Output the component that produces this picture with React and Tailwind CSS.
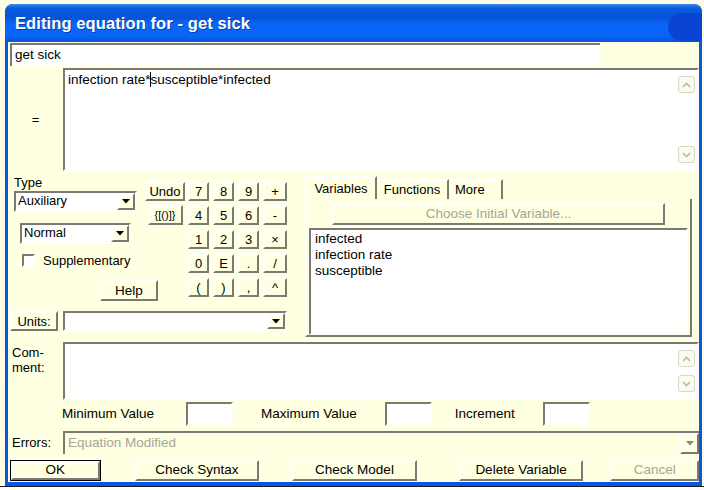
import React from 'react';

const font = { fontFamily: '"Liberation Sans", Arial, sans-serif' };

// classic 3D edges on the pale yellow dialog
const raised = 'border-2 border-t-white border-l-white border-b-[#7a7a72] border-r-[#7a7a72] bg-[#ffffe1]';
const sunken = 'border-2 border-t-[#7a7a72] border-l-[#7a7a72] border-b-[#fffff4] border-r-[#fffff4]';

function Btn({ className = '', children, disabled }) {
  return (
    <div
      className={`${raised} flex items-center justify-center leading-none ${
        disabled ? 'text-[#a6a69a]' : 'text-black'
      } ${className}`}
    >
      {children}
    </div>
  );
}

function DownArrow() {
  return (
    <svg width="8" height="5" viewBox="0 0 8 5">
      <path d="M0 0h8L4 4.5z" fill="#000" />
    </svg>
  );
}

function Select({ className = '', value }) {
  return (
    <div className={`${sunken} bg-white flex items-stretch ${className}`}>
      <div className="flex-1 pl-[2px] text-[13px] leading-[16px]">{value}</div>
      <div className={`${raised} w-[18px] flex items-center justify-center`}>
        <DownArrow />
      </div>
    </div>
  );
}

function ScrollArrow({ up }) {
  return (
    <div className="w-[17px] h-[17px] rounded-[3px] border border-[#d8d8c4] bg-[#fbfbee] flex items-center justify-center">
      <svg width="9" height="6" viewBox="0 0 9 6">
        <path
          d={up ? 'M1 5L4.5 1.5 8 5' : 'M1 1l3.5 3.5L8 1'}
          stroke="#b8b8b0"
          strokeWidth="1.6"
          fill="none"
        />
      </svg>
    </div>
  );
}

function ScrollCol() {
  return (
    <div className="w-[19px] flex flex-col justify-between py-[6px] pr-[2px]">
      <ScrollArrow up />
      <ScrollArrow />
    </div>
  );
}

const keys = ['7', '8', '9', '+', '4', '5', '6', '-', '1', '2', '3', '×', '0', 'E', '.', '/', '(', ')', ',', '^'];

export default function App() {
  return (
    <div className="w-[704px] h-[490px] bg-[#fffbe4] overflow-hidden flex flex-col" style={font}>
      <div className="h-[4px]" />
      <div className="ml-[5px] w-[697px] h-[482px] flex flex-col rounded-t-[8px] bg-[#0756e4] px-[3px] pb-[4px]">
        {/* title bar */}
        <div className="h-[38px] -mx-[3px] rounded-t-[8px] bg-[linear-gradient(#3b8cf5_0px,#0a5cdc_4px,#0553d6_14px,#0a66f8_20px,#0765f6_32px,#0751de_38px)] flex items-center pl-[10px] relative overflow-hidden">
          <span className="text-white font-bold text-[16.5px] tracking-[0.1px] [text-shadow:1px_1px_0_#0a3fa8]">
            Editing equation for - get sick
          </span>
          <div className="absolute right-[-14px] top-[9px] w-[48px] h-[28px] rounded-l-[16px] bg-[#0a44d2]" />
        </div>

        {/* client area */}
        <div className="flex-1 bg-[#ffffe1] flex flex-col text-[13px] text-black">
          <div className="h-[1px]" />
          <div className="ml-[2px] w-[590px] h-[23px] bg-white border-l-2 border-t-2 border-[#7a7a72] pl-[3px] leading-[19px] text-[13.5px]">
            get sick
          </div>

          {/* equation */}
          <div className="flex h-[103px] mt-[2px]">
            <div className="w-[55px] flex items-center justify-center text-[13px]">=</div>
            <div className={`${sunken} flex-1 bg-white flex`}>
              <div className="flex-1 pl-[3px] pt-[2px] leading-[15px] text-[13.5px]">
                infection rate*<span className="border-l border-black -ml-[1px]">s</span>usceptible*infected
              </div>
              <ScrollCol />
            </div>
          </div>

          {/* middle block */}
          <div className="flex mt-[5px] h-[161px]">
            <div className="w-[297px] flex flex-col">
              <div className="flex">
                <div className="w-[130px] flex flex-col pl-[6px]">
                  <div className="leading-[14px]">Type</div>
                  <Select className="mt-[1px] w-[123px] h-[21px]" value="Auxiliary" />
                  <Select className="mt-[11px] ml-[6px] w-[111px] h-[21px]" value="Normal" />
                  <div className="flex items-center mt-[7px] ml-[8px]">
                    <div className={`${sunken} w-[13px] h-[13px] bg-white`} />
                    <span className="ml-[8px]">Supplementary</span>
                  </div>
                </div>
                <div className="flex flex-col items-center w-[48px] pt-[6px] pl-[6px]">
                  <Btn className="w-[40px] h-[19px] text-[13px]">Undo</Btn>
                  <Btn className="mt-[4px] w-[35px] h-[20px] text-[11px]">{'{[()]}'}</Btn>
                </div>
                <div className="grid grid-cols-[21px_21px_21px_24px] gap-x-[4px] gap-y-[5px] pt-[6px] ml-[2px]">
                  {keys.map((k) => (
                    <Btn key={k} className="h-[19px] text-[13px]">
                      {k}
                    </Btn>
                  ))}
                </div>
              </div>
              <div className="flex -mt-[17px] ml-[92px]">
                <Btn className="w-[58px] h-[21px] text-[13.5px]">Help</Btn>
              </div>
              <div className="flex mt-[10px] items-center">
                <Btn className="ml-[2px] w-[48px] h-[20px] text-[13px]">Units:</Btn>
                <Select className="ml-[5px] w-[224px] h-[20px]" value="" />
              </div>
            </div>

            {/* tabs */}
            <div className="w-[390px] flex flex-col">
              <div className="flex items-end h-[23px]">
                <div className="h-[23px] w-[72px] border-t-2 border-l-2 border-white border-r-2 border-r-[#7a7a72] flex items-center justify-center rounded-tl-[2px]">
                  Variables
                </div>
                <div className="h-[20px] w-[72px] border-t-2 border-white border-r-2 border-r-[#7a7a72] flex items-center justify-center">
                  Functions
                </div>
                <div className="h-[20px] w-[54px] border-t-2 border-white border-r-2 border-r-[#7a7a72] flex items-center pl-[6px]">
                  More
                </div>
              </div>
              <div className="flex-1 border-l-2 border-white border-r-2 border-r-[#7a7a72] border-b-2 border-b-[#7a7a72] flex flex-col px-[2px] mr-[3px]">
                <Btn disabled className="mt-[4px] ml-[23px] w-[333px] h-[22px] text-[13.5px]">
                  Choose Initial Variable...
                </Btn>
                <div className={`${sunken} mt-[3px] flex-1 bg-white pl-[4px] pt-[1px] leading-[16px] text-[13.5px]`}>
                  <div>infected</div>
                  <div>infection rate</div>
                  <div>susceptible</div>
                </div>
              </div>
            </div>
          </div>

          {/* comment */}
          <div className="flex h-[58px] mt-[5px]">
            <div className="w-[55px] pl-[4px] pt-[3px] leading-[15px]">
              Com-
              <br />
              ment:
            </div>
            <div className={`${sunken} flex-1 bg-white flex justify-end`}>
              <ScrollCol />
            </div>
          </div>

          {/* limits */}
          <div className="flex items-center h-[24px] mt-[2px] text-[13.5px]">
            <span className="ml-[54px]">Minimum Value</span>
            <div className={`${sunken} ml-[32px] w-[47px] h-[24px] bg-white`} />
            <span className="ml-[28px]">Maximum Value</span>
            <div className={`${sunken} ml-[28px] w-[47px] h-[24px] bg-white`} />
            <span className="ml-[23px]">Increment</span>
            <div className={`${sunken} ml-[28px] w-[47px] h-[24px] bg-white`} />
          </div>

          {/* errors */}
          <div className="flex h-[23px] mt-[5px] items-center">
            <div className="w-[55px] pl-[4px]">Errors:</div>
            <div className="flex-1 h-[23px] border-l-2 border-t-2 border-[#7a7a72] flex items-stretch">
              <div className="flex-1 pl-[3px] leading-[19px] text-[13.5px] text-[#a6a69a]">Equation Modified</div>
              <div className={`${raised} w-[19px] flex items-center justify-center`}>
                <svg width="8" height="5" viewBox="0 0 8 5">
                  <path d="M0 0h8L4 4.5z" fill="#8a8a84" />
                </svg>
              </div>
            </div>
          </div>

          {/* buttons */}
          <div className="flex items-center h-[22px] mt-[5px] text-[13.5px]">
            <div className="ml-[2px] w-[91px] h-[21px] border border-black flex">
              <Btn className="flex-1">OK</Btn>
            </div>
            <Btn className="ml-[34px] w-[125px] h-[21px]">Check Syntax</Btn>
            <Btn className="ml-[33px] w-[125px] h-[21px]">Check Model</Btn>
            <Btn className="ml-[42px] w-[125px] h-[21px]">Delete Variable</Btn>
            <Btn disabled className="ml-[27px] w-[89px] h-[21px]">
              Cancel
            </Btn>
          </div>
        </div>
      </div>
      <div className="flex-1 bg-white border-t border-[#1a1a2a]" />
    </div>
  );
}
